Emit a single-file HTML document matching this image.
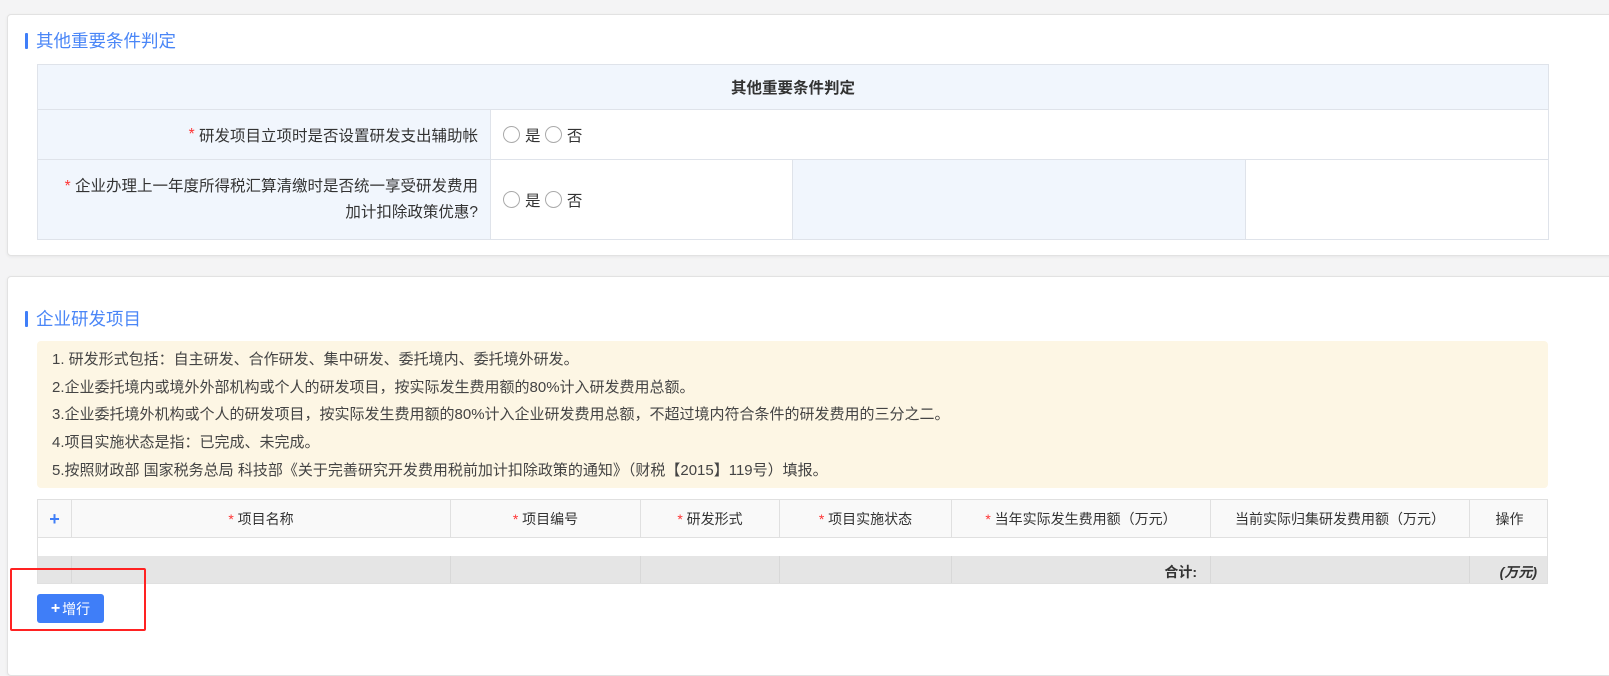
<!DOCTYPE html>
<html><head><meta charset="utf-8"><style>
*{box-sizing:border-box;margin:0;padding:0}
body{width:1609px;height:661px;background:#f4f4f5;font-family:"Liberation Sans","Noto Sans CJK SC",sans-serif;font-size:15.5px;color:#333;position:relative;overflow:hidden}
.card{position:absolute;background:#fff;border:1px solid #e2e2e2;border-radius:4px;box-shadow:0 1px 3px rgba(0,0,0,.06)}
.title{position:absolute;left:25px;color:#4a86f7;font-size:17.5px;line-height:20px;padding-left:11px}
.title:before{content:"";position:absolute;left:0;top:2px;width:3px;height:16px;background:#3f7ef8;border-radius:1px}
.abs{position:absolute}
.cell{position:absolute;border:1px solid #dfe3ea;display:flex;align-items:center}
.st{color:#f33}
.rad{display:inline-block;width:17px;height:17px;border:1px solid #aaa;border-radius:50%;vertical-align:-3px;margin-right:5px}
.th{position:absolute;border-right:1px solid #e0e0e0;height:38px;display:flex;align-items:center;justify-content:center;font-size:14px}
</style></head><body>
<div class="card" style="left:7px;top:14px;width:1610px;height:242px"></div>
<div class="title" style="top:31px">其他重要条件判定</div>
<div class="cell" style="left:37px;top:64px;width:1512px;height:46px;background:#f1f6fd;justify-content:center;font-weight:bold">其他重要条件判定</div>
<div class="cell" style="left:37px;top:109px;width:454px;height:51px;background:#f1f6fd;justify-content:flex-end;padding-right:12px"><span class="st">*</span>&nbsp;研发项目立项时是否设置研发支出辅助帐</div>
<div class="cell" style="left:490px;top:109px;width:1059px;height:51px;padding-left:12px"><span class="rad"></span>是&nbsp;<span class="rad"></span>否</div>
<div class="cell" style="left:37px;top:159px;width:454px;height:81px;background:#f1f6fd;justify-content:flex-end;padding-right:12px;text-align:right;line-height:26px"><div><span class="st">*</span> 企业办理上一年度所得税汇算清缴时是否统一享受研发费用<br>加计扣除政策优惠?</div></div>
<div class="cell" style="left:490px;top:159px;width:303px;height:81px;padding-left:12px"><span class="rad"></span>是&nbsp;<span class="rad"></span>否</div>
<div class="cell" style="left:792px;top:159px;width:454px;height:81px;background:#f1f6fd"></div>
<div class="cell" style="left:1245px;top:159px;width:304px;height:81px"></div>

<div class="card" style="left:7px;top:276px;width:1610px;height:400px"></div>
<div class="title" style="top:309px">企业研发项目</div>
<div class="abs" style="left:37px;top:341px;width:1511px;height:147px;background:#fdf6e4;border-radius:4px;padding:5px 0 0 15px;line-height:27.7px;font-size:15px;color:#444">
1. 研发形式包括：自主研发、合作研发、集中研发、委托境内、委托境外研发。<br>
2.企业委托境内或境外外部机构或个人的研发项目，按实际发生费用额的80%计入研发费用总额。<br>
3.企业委托境外机构或个人的研发项目，按实际发生费用额的80%计入企业研发费用总额，不超过境内符合条件的研发费用的三分之二。<br>
4.项目实施状态是指：已完成、未完成。<br>
5.按照财政部 国家税务总局 科技部《关于完善研究开发费用税前加计扣除政策的通知》（财税【2015】119号）填报。</div>

<div class="abs" style="left:37px;top:499px;width:1511px;height:85px;border:1px solid #e0e0e0;overflow:hidden">
<div class="abs" style="left:0;top:0;width:1511px;height:38px;background:#f9f9f9;border-bottom:1px solid #e0e0e0"></div>
<div class="abs" style="left:0;top:56px;width:1511px;height:28px;background:#e5e5e5"></div>
<div class="th" style="left:0;width:34px;color:#3f7ef8;font-weight:bold;font-size:18px">+</div>
<div class="th" style="left:34px;width:379px"><span class="st">*</span>&nbsp;项目名称</div>
<div class="th" style="left:413px;width:190px"><span class="st">*</span>&nbsp;项目编号</div>
<div class="th" style="left:603px;width:139px"><span class="st">*</span>&nbsp;研发形式</div>
<div class="th" style="left:742px;width:172px"><span class="st">*</span>&nbsp;项目实施状态</div>
<div class="th" style="left:914px;width:259px"><span class="st">*</span>&nbsp;当年实际发生费用额（万元）</div>
<div class="th" style="left:1173px;width:259px">当前实际归集研发费用额（万元）</div>
<div class="th" style="left:1432px;width:79px;border-right:none">操作</div>
<div class="abs" style="left:33px;top:56px;height:28px;border-left:1px solid #d8d8d8"></div>
<div class="abs" style="left:412px;top:56px;height:28px;border-left:1px solid #d8d8d8"></div>
<div class="abs" style="left:602px;top:56px;height:28px;border-left:1px solid #d8d8d8"></div>
<div class="abs" style="left:741px;top:56px;height:28px;border-left:1px solid #d8d8d8"></div>
<div class="abs" style="left:913px;top:56px;height:28px;border-left:1px solid #d8d8d8"></div>
<div class="abs" style="left:1172px;top:56px;height:28px;border-left:1px solid #d8d8d8"></div>
<div class="abs" style="left:1431px;top:56px;height:28px;border-left:1px solid #d8d8d8"></div>
<div class="abs" style="left:913px;top:62px;width:246px;text-align:right;font-weight:bold;font-size:14px">合计:</div>
<div class="abs" style="left:1431px;top:62px;width:68px;text-align:right;font-weight:bold;font-style:italic;font-size:14px">(万元)</div>
</div>
<div class="abs" style="left:37px;top:594px;width:67px;height:29px;background:#3f7ef8;border-radius:3px;color:#fff;font-size:14px;display:flex;align-items:center;justify-content:center"><b style="font-size:16px;margin-right:2px">+</b>增行</div>
<div class="abs" style="left:10px;top:568px;width:136px;height:63px;border:2px solid #f22;border-radius:2px"></div>
</body></html>
